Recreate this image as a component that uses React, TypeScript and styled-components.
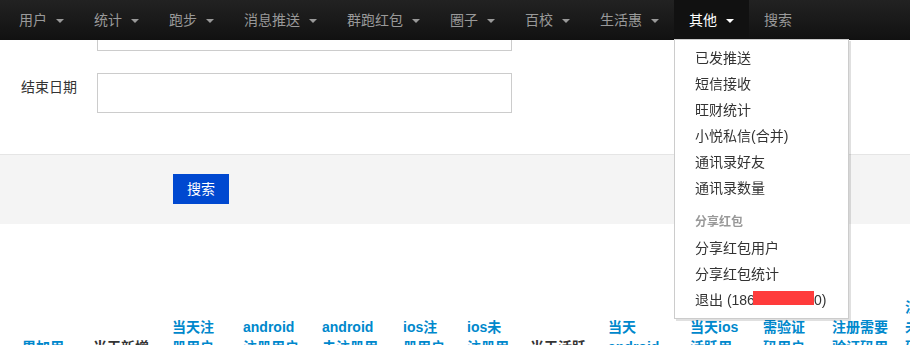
import React from "react";
import styled, { createGlobalStyle } from "styled-components";

const GlobalStyle = createGlobalStyle`
  * {
    box-sizing: border-box;
  }

  html, body {
    margin: 0;
    padding: 0;
  }

  body {
    font-family: "Liberation Sans", "Noto Sans CJK SC", sans-serif;
    font-size: 14px;
    line-height: 20px;
    color: #333;
    background: #fff;
    overflow: hidden;
  }
`;

const NavBar = styled.div`
  position: fixed;
  top: 0;
  left: 0;
  right: 0;
  height: 40px;
  background-image: linear-gradient(to bottom, #222222, #111111);
  z-index: 10;
`;

const NavList = styled.ul`
  display: flex;
  margin: 0;
  padding: 0 0 0 4px;
  list-style: none;
`;

const NavItem = styled.li`
  position: relative;
`;

const NavLink = styled.a<{ $open?: boolean }>`
  display: block;
  padding: 10px 15px;
  line-height: 20px;
  font-size: 14px;
  white-space: nowrap;
  text-decoration: none;
  color: ${(p) => (p.$open ? "#fff" : "#999")};
  background: ${(p) => (p.$open ? "#111" : "transparent")};
`;

const Caret = styled.span<{ $open?: boolean }>`
  display: inline-block;
  width: 0;
  height: 0;
  margin-left: 9px;
  margin-top: 9px;
  vertical-align: top;
  border-top: 4px solid ${(p) => (p.$open ? "#fff" : "#999")};
  border-left: 4px solid transparent;
  border-right: 4px solid transparent;
`;

const Dropdown = styled.ul`
  position: absolute;
  top: 39px;
  left: 0;
  width: 175px;
  margin: 0;
  padding: 5px 0;
  list-style: none;
  background: #fff;
  border: 1px solid #ccc;
  box-shadow: 2px 2px 0 rgba(0, 0, 0, 0.12);
  z-index: 20;
`;

const MenuLink = styled.a`
  display: block;
  padding: 3px 20px;
  line-height: 20px;
  color: #333;
  white-space: nowrap;
  text-decoration: none;
`;

const MenuHeader = styled.li`
  padding: 11px 20px 3px;
  line-height: 20px;
  font-size: 12px;
  font-weight: bold;
  color: #999;
`;

const Redacted = styled.span`
  display: inline-block;
  width: 61px;
  height: 14px;
  margin-left: -2px;
  background: #ff3b3b;
`;

const FormBody = styled.form`
  padding: 11px 0 0;
  margin: 0;
`;

const ControlGroup = styled.div`
  display: flex;
  align-items: flex-start;
  padding-left: 21px;

  & + & {
    margin-top: 22px;
  }
`;

const Label = styled.label`
  width: 76px;
  padding-top: 4px;
  line-height: 20px;
  color: #333;
`;

const TextInput = styled.input`
  width: 415px;
  height: 40px;
  margin: 0;
  padding: 4px 6px;
  border: 1px solid #ccc;
  background: #fff;
  font: inherit;
`;

const FormActions = styled.div`
  margin-top: 41px;
  padding: 19px 0 20px 173px;
  background: #f4f4f4;
  border-top: 1px solid #e5e5e5;
`;

const SearchButton = styled.button`
  display: block;
  height: 30px;
  padding: 0 14px;
  border: none;
  background: #0048d0;
  color: #fff;
  font: inherit;
  line-height: 30px;
`;

const StatsTable = styled.table`
  margin: 65px 0 0 14px;
  border-collapse: collapse;
  table-layout: fixed;
  width: 943px;
`;

const HeadCell = styled.th<{ $w: number }>`
  width: ${(p) => p.$w}px;
  padding: 8px;
  vertical-align: bottom;
  text-align: left;
  font-weight: bold;
  line-height: 20px;
  white-space: nowrap;
  color: #333;

  a {
    color: #0088cc;
    text-decoration: none;
  }
`;

const navItems = [
  { label: "用户", caret: true },
  { label: "统计", caret: true },
  { label: "跑步", caret: true },
  { label: "消息推送", caret: true },
  { label: "群跑红包", caret: true },
  { label: "圈子", caret: true },
  { label: "百校", caret: true },
  { label: "生活惠", caret: true },
  { label: "其他", caret: true, open: true },
  { label: "搜索", caret: false },
];

const otherMenu = ["已发推送", "短信接收", "旺财统计", "小悦私信(合并)", "通讯录好友", "通讯录数量"];
const shareMenu = ["分享红包用户", "分享红包统计"];

const columns: { lines: string[]; w: number; link: boolean }[] = [
  { lines: ["累加用", "户数"], w: 71, link: true },
  { lines: ["当天新增", "用户"], w: 79, link: false },
  { lines: ["当天注", "册用户", "数"], w: 71, link: true },
  { lines: ["android", "注册用户", "数"], w: 79, link: true },
  { lines: ["android", "未注册用", "户数"], w: 81, link: true },
  { lines: ["ios注", "册用户", "数"], w: 64, link: true },
  { lines: ["ios未", "注册用", "户数"], w: 63, link: true },
  { lines: ["当天活跃", "用户"], w: 78, link: false },
  { lines: ["当天", "android", "活跃用户"], w: 82, link: true },
  { lines: ["当天ios", "活跃用", "户"], w: 73, link: true },
  { lines: ["需验证", "码用户", "数"], w: 69, link: true },
  { lines: ["注册需要", "验证码用", "户数"], w: 73, link: true },
  { lines: ["注册", "未验证", "码用户", "数"], w: 60, link: true },
];

function withBreaks(lines: string[]) {
  return lines.map((line, i) => (
    <React.Fragment key={i}>
      {i > 0 && <br />}
      {line}
    </React.Fragment>
  ));
}

function App() {
  return (
    <>
      <GlobalStyle />
      <NavBar>
        <NavList>
          {navItems.map((item) => (
            <NavItem key={item.label}>
              <NavLink href="#" $open={item.open}>
                {item.label}
                {item.caret && <Caret $open={item.open} />}
              </NavLink>
              {item.open && (
                <Dropdown>
                  {otherMenu.map((m) => (
                    <li key={m}>
                      <MenuLink href="#">{m}</MenuLink>
                    </li>
                  ))}
                  <MenuHeader>分享红包</MenuHeader>
                  {shareMenu.map((m) => (
                    <li key={m}>
                      <MenuLink href="#">{m}</MenuLink>
                    </li>
                  ))}
                  <li>
                    <MenuLink href="#">
                      退出 (186<Redacted />0)
                    </MenuLink>
                  </li>
                </Dropdown>
              )}
            </NavItem>
          ))}
        </NavList>
      </NavBar>

      <FormBody>
        <ControlGroup>
          <Label>开始日期</Label>
          <TextInput type="text" />
        </ControlGroup>
        <ControlGroup>
          <Label>结束日期</Label>
          <TextInput type="text" />
        </ControlGroup>
        <FormActions>
          <SearchButton type="button">搜索</SearchButton>
        </FormActions>
      </FormBody>

      <StatsTable>
        <thead>
          <tr>
            {columns.map((col, i) => (
              <HeadCell key={i} $w={col.w}>
                {col.link ? <a href="#">{withBreaks(col.lines)}</a> : withBreaks(col.lines)}
              </HeadCell>
            ))}
          </tr>
        </thead>
      </StatsTable>
    </>
  );
}

export default App;
